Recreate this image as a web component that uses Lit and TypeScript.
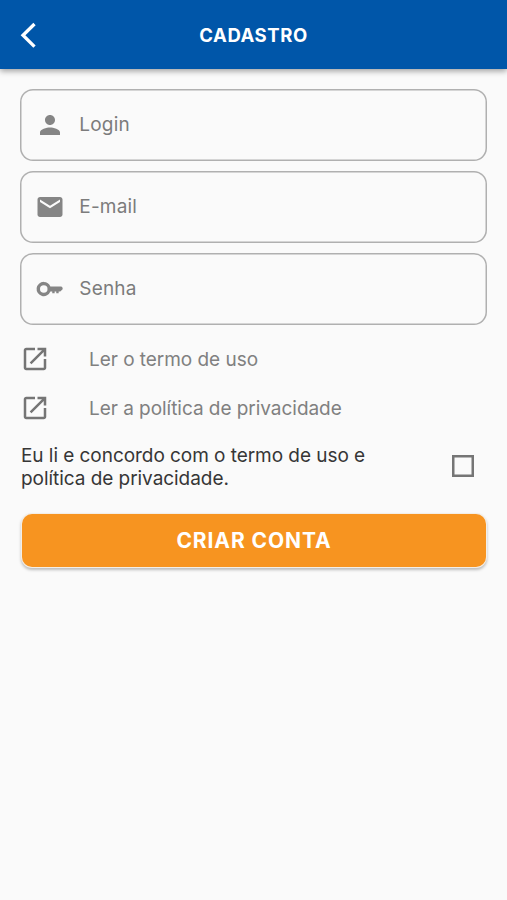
import { LitElement, html, css, svg } from "lit";
import { customElement } from "lit/decorators.js";

const icons = {
  person: svg`<path d="M12 12c2.21 0 4-1.79 4-4s-1.79-4-4-4-4 1.79-4 4 1.79 4 4 4zm0 2c-2.67 0-8 1.34-8 4v2h16v-2c0-2.66-5.33-4-8-4z"/>`,
  mail: svg`<path d="M20 4H4c-1.1 0-1.99.9-1.99 2L2 18c0 1.1.9 2 2 2h16c1.1 0 2-.9 2-2V6c0-1.1-.9-2-2-2zm0 4l-8 5-8-5V6l8 5 8-5v2z"/>`,
  key: svg`<path fill-rule="evenodd" d="M7 6.300a5.700 5.700 0 1 0 5.300 7.700h1.500v1.300h1.900V14h1.300v1.300h1.900V14h1.300l1.900-1.900v-1.200l-1-1h-8.800a5.700 5.700 0 0 0-5.300-3.600zm0 2.700a3 3 0 1 1 0 6 3 3 0 0 1 0-6z"/>`,
  open: svg`<path d="M19 19H5V5h7V3H5c-1.110 0-2 .9-2 2v14c0 1.100.89 2 2 2h14c1.100 0 2-.9 2-2v-7h-2v7zM14 3v2h3.590l-9.830 9.830 1.410 1.410L19 6.410V10h2V3h-7z"/>`,
};

@customElement("app-root")
export class AppRoot extends LitElement {
  static styles = css`
    :host {
      display: block;
      min-height: 900px;
      background: #fafafa;
      font-family: Inter, "Liberation Sans", sans-serif;
      color: #363636;
    }
    header {
      display: grid;
      grid-template-columns: 56px 1fr 56px;
      align-items: center;
      height: 69px;
      background: #0056a9;
      color: #fff;
      box-shadow: 0 2px 6px rgba(0, 0, 0, 0.38);
    }
    .back {
      width: 24px;
      height: 28px;
      margin-left: 15.5px;
      fill: none;
      stroke: #fff;
      stroke-width: 3.3;
    }
    h1 {
      margin: 0;
      text-align: center;
      font-size: 18.5px;
      font-weight: 700;
      letter-spacing: 0.55px;
    }
    main {
      padding: 20px 20px 0;
    }
    .field {
      box-sizing: border-box;
      display: flex;
      align-items: center;
      gap: 14.7px;
      height: 72px;
      margin-bottom: 10px;
      padding-left: 14.6px;
      border-radius: 13px;
      box-shadow: inset 0 0 0 1.5px #b0b0b0;
      font-size: 19px;
      letter-spacing: 0.2px;
      color: #7c7c7c;
    }
    .field span {
      padding-bottom: 1px;
    }
    .icon {
      display: block;
      width: 30px;
      height: 30px;
      flex: none;
      fill: #858585;
    }
    .links {
      margin-top: -1px;
    }
    .link {
      display: flex;
      align-items: center;
      gap: 39px;
      height: 49px;
      font-size: 19px;
      letter-spacing: -0.04px;
      color: #808080;
    }
    .link span {
      padding-top: 2px;
    }
    .link .icon {
      fill: #757575;
    }
    .accept {
      display: flex;
      align-items: center;
      justify-content: space-between;
      height: 68px;
      padding: 0 13px 0 1px;
    }
    .accept p {
      margin: 0;
      padding-top: 2px;
      width: 360px;
      font-size: 19px;
      line-height: 23.5px;
      letter-spacing: -0.05px;
    }
    .box {
      width: 22px;
      height: 22px;
      box-shadow: inset 0 0 0 2.5px #757575;
    }
    button {
      display: block;
      width: 464px;
      height: 53px;
      margin: 14px auto 0;
      padding: 0 0 0 1px;
      border: 0;
      border-radius: 10px;
      background: #f79420;
      color: #fff;
      font: 700 21px Inter, "Liberation Sans", sans-serif;
      letter-spacing: 0.9px;
      box-shadow: 0 0 0 1px #f4eee6, 0 2px 3px 1px rgba(0, 0, 0, 0.25);
    }
  `;

  private icon(shape: unknown) {
    return html`<svg class="icon" viewBox="0 0 24 24">${shape}</svg>`;
  }

  private field(shape: unknown, label: string) {
    return html`<div class="field">${this.icon(shape)}<span>${label}</span></div>`;
  }

  private link(label: string) {
    return html`<div class="link">${this.icon(icons.open)}<span>${label}</span></div>`;
  }

  render() {
    return html`
      <header>
        <svg class="back" viewBox="0 0 24 28"><path d="M18.500 3L7 14.300L18.500 25.600" /></svg>
        <h1>CADASTRO</h1>
      </header>
      <main>
        ${this.field(icons.person, "Login")}
        ${this.field(icons.mail, "E-mail")}
        ${this.field(icons.key, "Senha")}
        <div class="links">
          ${this.link("Ler o termo de uso")}
          ${this.link("Ler a política de privacidade")}
        </div>
        <div class="accept">
          <p>Eu li e concordo com o termo de uso e política de privacidade.</p>
          <div class="box" role="checkbox" aria-checked="false"></div>
        </div>
        <button>CRIAR CONTA</button>
      </main>
    `;
  }
}
